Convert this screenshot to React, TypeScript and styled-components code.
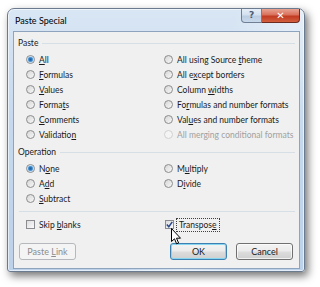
import React from "react";
import styled, { createGlobalStyle } from "styled-components";

const Global = createGlobalStyle`
  html, body {
    margin: 0;
    background: #ffffff;
  }
  body {
    font-family: Lato, "Noto Sans", sans-serif;
    font-size: 8.5px;
    color: #1a1a1a;
  }
`;

const Page = styled.div`
  padding: 8px 0 0 7px;
  width: 320px;
  height: 287px;
  box-sizing: border-box;
  position: relative;
`;

const Window = styled.div`
  width: 298px;
  height: 264px;
  box-sizing: border-box;
  border: 1px solid #6b7b8f;
  border-radius: 7px 7px 3px 3px;
  background:
    linear-gradient(115deg, rgba(255, 255, 255, 0) 55%, rgba(255, 255, 255, 0.35) 70%, rgba(255, 255, 255, 0) 85%),
    linear-gradient(to bottom, #d9e6f4, #c6d9ee 40%, #bcd2ea);
  box-shadow: 3px 4px 9px rgba(0, 0, 0, 0.55), inset 0 0 0 1px rgba(255, 255, 255, 0.6);
  padding: 0 4px 2px 5px;
  display: flex;
  flex-direction: column;
`;

const TitleBar = styled.div`
  height: 22px;
  display: flex;
  align-items: flex-start;
  justify-content: space-between;
  flex-shrink: 0;
`;

const Title = styled.span`
  padding: 6px 0 0 2px;
  font-size: 9px;
  color: #000;
  line-height: 12px;
`;

const CaptionButtons = styled.div`
  display: flex;
`;

const CaptionButton = styled.div<{ $close?: boolean }>`
  width: ${(p) => (p.$close ? 38 : 21)}px;
  height: 14px;
  box-sizing: border-box;
  border: 1px solid ${(p) => (p.$close ? "#6d2a1f" : "#6f7f94")};
  border-top: none;
  border-radius: ${(p) => (p.$close ? "0 0 4px 0" : "0 0 0 4px")};
  ${(p) => (p.$close ? "border-left: none;" : "")}
  background: ${(p) =>
    p.$close
      ? "linear-gradient(to bottom, #e8a493 0%, #d9715c 45%, #c13b22 55%, #d2603f 100%)"
      : "linear-gradient(to bottom, #e6eef8 0%, #d3e0ef 45%, #bccde2 55%, #c9d9ec 100%)"};
  display: flex;
  align-items: center;
  justify-content: center;
  color: ${(p) => (p.$close ? "#ffffff" : "#4a5a70")};
  font-family: "DejaVu Sans", sans-serif;
  font-weight: bold;
  font-size: ${(p) => (p.$close ? 10 : 9)}px;
  line-height: 1;
`;

const Client = styled.div`
  flex: 1;
  background: #f0f0f0;
  border: 1px solid #8ea3bd;
  padding: 0 4px;
  display: flex;
  flex-direction: column;
`;

const GroupHeader = styled.div<{ $top: number }>`
  margin-top: ${(p) => p.$top}px;
  height: 14px;
  display: flex;
  align-items: center;
  gap: 4px;
  &::after {
    content: "";
    flex: 1;
    height: 1px;
    background: #d5dfe5;
  }
`;

const Options = styled.div<{ $top: number; $rows: number }>`
  margin-top: ${(p) => p.$top}px;
  padding-left: 8px;
  display: grid;
  grid-template-columns: 138px 1fr;
  grid-auto-flow: column;
  grid-template-rows: repeat(${(p) => p.$rows}, 15px);
`;

const Option = styled.label<{ $disabled?: boolean }>`
  display: flex;
  align-items: center;
  gap: 4px;
  height: 15px;
  white-space: nowrap;
  color: ${(p) => (p.$disabled ? "#a0a0a0" : "#1a1a1a")};
`;

const Radio = styled.span<{ $checked?: boolean; $disabled?: boolean }>`
  width: 9px;
  height: 9px;
  box-sizing: border-box;
  border-radius: 50%;
  border: 1px solid ${(p) => (p.$disabled ? "#cfd1d3" : "#8a8c8f")};
  background: ${(p) =>
    p.$disabled
      ? "#f4f4f4"
      : p.$checked
      ? "radial-gradient(circle at 50% 50%, #1f5f9c 0, #2f7cc4 1.6px, #7cb6e6 2.6px, #e6eef6 3.2px)"
      : "linear-gradient(135deg, #d6d6d6, #f8f8f8)"};
  flex-shrink: 0;
`;

const Checkbox = styled.span`
  width: 9px;
  height: 9px;
  box-sizing: border-box;
  border: 1px solid #8a8c8f;
  background: linear-gradient(135deg, #dcdcdc, #fbfbfb);
  flex-shrink: 0;
  display: flex;
  align-items: center;
  justify-content: center;
`;

const Key = styled.span`
  text-decoration: underline;
  text-underline-offset: 1px;
`;

const Focused = styled.span`
  outline: 1px dotted #404040;
  outline-offset: 1px;
  padding: 0 1px;
`;

const Separator = styled.div`
  margin-top: 5px;
  margin-left: 1px;
  height: 1px;
  background: #d5dfe5;
`;

const CheckRow = styled.div`
  margin-top: 5px;
  padding-left: 8px;
  display: grid;
  grid-template-columns: 139px 1fr;
`;

const ButtonRow = styled.div`
  margin-top: 11px;
  padding: 0 2px 0 1px;
  display: flex;
  align-items: center;
`;

const Button = styled.div<{ $variant?: "default" | "disabled" }>`
  width: 57px;
  height: 17px;
  box-sizing: border-box;
  border-radius: 3px;
  display: flex;
  align-items: center;
  justify-content: center;
  font-size: 9px;
  border: 1px solid
    ${(p) => (p.$variant === "default" ? "#3c7fb1" : p.$variant === "disabled" ? "#b5b9bd" : "#707070")};
  background: ${(p) =>
    p.$variant === "disabled"
      ? "#f4f4f4"
      : "linear-gradient(to bottom, #f3f3f3 0%, #ebebeb 49%, #dddddd 51%, #cfcfcf 100%)"};
  box-shadow: ${(p) =>
    p.$variant === "default"
      ? "inset 0 0 0 1px #86d6f2"
      : p.$variant === "disabled"
      ? "none"
      : "inset 0 0 0 1px rgba(255,255,255,0.7)"};
  color: ${(p) => (p.$variant === "disabled" ? "#8c8c8c" : "#1a1a1a")};
`;

const Spacer = styled.div`
  flex: 1;
`;

const Gap = styled.div`
  width: 9px;
`;

const Cursor = styled.svg`
  position: absolute;
  left: 171px;
  top: 228px;
`;

type Opt = { label: React.ReactNode; checked?: boolean; disabled?: boolean };

const u = (before: string, key: string, after: string) => (
  <span>
    {before}
    <Key>{key}</Key>
    {after}
  </span>
);

const pasteOptions: Opt[] = [
  { label: u("", "A", "ll"), checked: true },
  { label: u("", "F", "ormulas") },
  { label: u("", "V", "alues") },
  { label: u("Forma", "t", "s") },
  { label: u("", "C", "omments") },
  { label: u("Validatio", "n", "") },
  { label: u("All using Source ", "t", "heme") },
  { label: u("All e", "x", "cept borders") },
  { label: u("Column ", "w", "idths") },
  { label: u("Fo", "r", "mulas and number formats") },
  { label: u("Val", "u", "es and number formats") },
  { label: "All merging conditional formats", disabled: true },
];

const operationOptions: Opt[] = [
  { label: u("N", "o", "ne"), checked: true },
  { label: u("A", "d", "d") },
  { label: u("", "S", "ubtract") },
  { label: u("M", "u", "ltiply") },
  { label: u("D", "i", "vide") },
];

const RadioList = ({ items, rows, top }: { items: Opt[]; rows: number; top: number }) => (
  <Options $top={top} $rows={rows}>
    {items.map((o, i) => (
      <Option key={i} $disabled={o.disabled}>
        <Radio $checked={o.checked} $disabled={o.disabled} />
        {o.label}
      </Option>
    ))}
  </Options>
);

export default function App() {
  return (
    <>
      <Global />
      <Page>
        <Window>
          <TitleBar>
            <Title>Paste Special</Title>
            <CaptionButtons>
              <CaptionButton>?</CaptionButton>
              <CaptionButton $close>✕</CaptionButton>
            </CaptionButtons>
          </TitleBar>
          <Client>
            <GroupHeader $top={4}>Paste</GroupHeader>
            <RadioList items={pasteOptions} rows={6} top={2} />
            <GroupHeader $top={3}>Operation</GroupHeader>
            <RadioList items={operationOptions} rows={3} top={2} />
            <Separator />
            <CheckRow>
              <Option>
                <Checkbox />
                {u("Skip ", "b", "lanks")}
              </Option>
              <Option>
                <Checkbox>
                  <svg width="7" height="7" viewBox="0 0 7 7">
                    <path d="M0.8 3.6 L2.8 5.8 L6.3 0.9" fill="none" stroke="#2c4a8c" strokeWidth="1.5" />
                  </svg>
                </Checkbox>
                <Focused>{u("Transpos", "e", "")}</Focused>
              </Option>
            </CheckRow>
            <ButtonRow>
              <Button $variant="disabled">{u("Paste ", "L", "ink")}</Button>
              <Spacer />
              <Button $variant="default">OK</Button>
              <Gap />
              <Button>Cancel</Button>
            </ButtonRow>
          </Client>
        </Window>
        <Cursor width="11" height="17" viewBox="0 0 11 17">
          <path
            d="M0.5 0.5 L0.5 13.5 L3.5 10.8 L5.6 15.8 L7.6 15 L5.5 10.2 L9.5 10.2 Z"
            fill="#ffffff"
            stroke="#000000"
            strokeWidth="1"
            strokeLinejoin="round"
          />
        </Cursor>
      </Page>
    </>
  );
}
